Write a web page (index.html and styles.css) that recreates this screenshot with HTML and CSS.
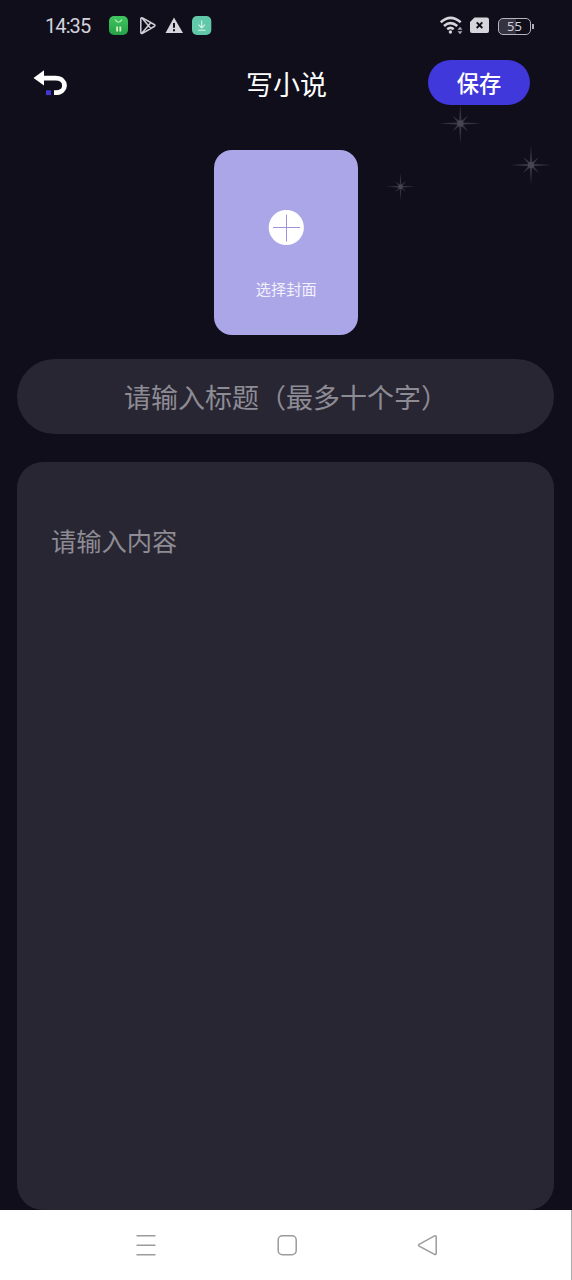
FILE: index.html
```html
<!DOCTYPE html>
<html lang="zh-CN">
<head>
<meta charset="utf-8">
<title>写小说</title>
<link rel="stylesheet" href="styles.css">
</head>
<body>
<div class="screen">
  <header class="status">
    <span class="time">14:35</span>
    <svg class="status-icons" width="104" height="20" viewBox="0 0 104 20">
      <defs><linearGradient id="green" x1="0" y1="0" x2="0" y2="1"><stop offset="0" stop-color="#3fc75f"/><stop offset="1" stop-color="#25a048"/></linearGradient></defs>
      <rect x="0" y="0" width="19" height="19" rx="5" fill="url(#green)"/>
      <path d="M6 3.500Q9.500 9 13 3.500" fill="none" stroke="#c8f0b8" stroke-width="1.200"/>
      <path d="M7.200 10.500h1.800v5H7.200zM10.400 10.500h1.800v5h-1.800z" fill="#d5f2c4"/>
      <path d="M31.800 3Q31.800 1.200 33.500 1.900L45.200 8.500Q46.800 9.500 45.200 10.500L33.500 17.300Q31.800 18 31.800 16.200ZM33 2L41.800 12.500M33 17L41.800 6.700" fill="none" stroke="#cfced5" stroke-width="1.500" stroke-linejoin="round"/>
      <path d="M65 1.500L74 17H56.500Z" fill="#d6d5dc"/>
      <path d="M65 7v4.800M65 13.300v2" stroke="#100e1b" stroke-width="2"/>
      <rect x="83" y="0" width="19.300" height="19" rx="5" fill="#61c8a8"/>
      <path d="M92.700 4.500v7M89.500 8.700l3.200 3.200 3.200-3.200M89 14.300h7.500" fill="none" stroke="#d8f3e8" stroke-width="1.100"/>
    </svg>
    <svg class="status-wifi" width="49" height="20" viewBox="0 0 49 20">
      <g fill="none" stroke="#d6d5dc" stroke-width="2.500">
        <path d="M.8 6.300Q10.500-2.500 20.700 6.300M4 10Q10.500 4.300 17.300 10M7.200 13.300Q10.500 10.500 13.700 13.300"/>
      </g>
      <circle cx="10.400" cy="16" r="1.700" fill="#d6d5dc"/>
      <path d="M17.500 13.800l2.500-3 2.500 3zM17.500 15.300h5l-2.500 3z" fill="#aaa9b2"/>
      <path d="M34.500 1.500H47q2 0 2 2V15q0 2-2 2H32q-2 0-2-2V6z" fill="#d6d5dc"/>
      <path d="M36.700 6.400l5.600 5.600M42.300 6.400l-5.600 5.600" stroke="#100e1b" stroke-width="1.900"/>
    </svg>
    <div class="battery"><span class="level">55</span></div>
  </header>

  <nav class="bar">
    <svg class="back" width="36" height="28" viewBox="0 0 36 28">
      <path d="M9 9.200H22.500C34.500 9.200 34.500 23.600 22.500 23.600H21" fill="none" stroke="#fff" stroke-width="4.800"/>
      <path d="M.5 9L11 1.200V16.500Z" fill="#fff"/>
      <rect x="13" y="21.300" width="5" height="4.800" fill="#4038d3"/>
    </svg>
    <h1 class="title">写小说</h1>
    <button class="save">保存</button>
  </nav>

  <svg class="stars" width="172" height="100" viewBox="0 0 172 100">
    <defs>
      <g id="star">
        <path d="M0-20L1.300-1.300 21 0 1.300 1.300 0 20-1.300 1.300-21 0-1.300-1.300ZM-8-8L0-2 8-8 2 0 8 8 0 2-8 8-2 0Z" fill="#35333f"/>
        <circle r="3.200" fill="#474551"/>
      </g>
    </defs>
    <use href="#star" x="70.300" y="18.500"/>
    <use href="#star" x="141" y="60"/>
    <use href="#star" transform="translate(10.500 81.700) scale(.7)"/>
  </svg>

  <main class="form">
    <div class="cover">
      <svg class="plus" width="36" height="36" viewBox="0 0 36 36">
        <circle cx="18.300" cy="17.500" r="17.600" fill="#fff"/>
        <path d="M5 17.500h27M18.500 4.500v27" stroke="#9b94d8" stroke-width="1"/>
      </svg>
      <span class="cover-label">选择封面</span>
    </div>
    <div class="field">请输入标题（最多十个字）</div>
    <div class="editor">请输入内容</div>
  </main>

  <footer class="system-nav">
    <svg width="22" height="22" viewBox="0 0 22 22"><path d="M1.500 1.800h19M1.500 11.300h19M1.500 20.800h19"/></svg>
    <svg width="22" height="22" viewBox="0 0 22 22"><rect x="2.200" y="1.800" width="18" height="19" rx="4.200"/></svg>
    <svg width="22" height="22" viewBox="0 0 22 22"><path d="M2.200 10.300L17.500 1.900Q19.200 1.100 19.200 3V19.200Q19.200 21.100 17.500 20.300L2.200 12.200Q.8 11.200 2.200 10.300Z"/></svg>
  </footer>
</div>
</body>
</html>
```
FILE: styles.css
```css
* { box-sizing: border-box; }

body {
  margin: 0;
  background: #100e1b;
  font-family: "Noto Sans", "Noto Sans CJK SC", sans-serif;
}

.screen {
  position: relative;
  display: flex;
  flex-direction: column;
  width: 572px;
  height: 1280px;
  background: #100e1b;
  overflow: hidden;
}

.status {
  display: flex;
  align-items: flex-start;
  height: 60px;
  padding: 16px 38px 0 45px;
}

.time {
  width: 64px;
  color: #d3d2da;
  font: 20px/21px Roboto, sans-serif;
  letter-spacing: -0.900px;
  white-space: nowrap;
}

.status-wifi { margin: 0 9px 0 auto; }

.battery {
  display: flex;
  align-items: center;
  width: 36px;
  height: 20px;
}

.battery::after {
  content: "";
  width: 2px;
  height: 5px;
  margin-left: 1px;
  background: #aeadb6;
}

.level {
  width: 33px;
  height: 17px;
  border: 1px solid #b5b4bc;
  border-radius: 5px;
  background: linear-gradient(90deg, #35333f 55%, #100e1b 55%);
  color: #d3d2da;
  font: 13px/15px "Noto Sans", sans-serif;
  text-align: center;
}

.bar {
  display: grid;
  grid-template-columns: 1fr 100px 1fr;
  grid-template-rows: 45px;
  align-items: center;
  height: 45px;
  padding: 0 42px 0 33px;
}

.title {
  margin: 2px -5px 0 5px;
  color: #fff;
  font: 400 27px/43px "Noto Sans CJK SC", sans-serif;
  text-align: center;
  white-space: nowrap;
}

.save {
  justify-self: end;
  width: 102px;
  height: 45px;
  padding: 0 0 2px;
  border: 0;
  border-radius: 23px;
  background: #4038da;
  color: #fff;
  font: 500 22.300px/42px "Noto Sans CJK SC", sans-serif;
}

.stars {
  position: absolute;
  top: 105px;
  left: 390px;
  overflow: visible;
}

.form {
  display: flex;
  flex: 1;
  flex-direction: column;
  align-items: center;
  padding: 45px 18px 0 17.400px;
  font-family: "Noto Sans CJK SC", sans-serif;
}

.cover {
  display: flex;
  flex-direction: column;
  align-items: center;
  width: 144.500px;
  height: 185px;
  padding-top: 60px;
  margin-left: 1px;
  border-radius: 18px;
  background: #aba6e7;
}

.cover-label {
  margin-top: 30px;
  color: #f3f1fc;
  font-size: 15.200px;
  line-height: 24px;
}

.field {
  width: 100%;
  height: 74.500px;
  margin-top: 24px;
  padding-left: 106.500px;
  border-radius: 38px;
  background: #282632;
  color: #8d8b94;
  font-size: 27px;
  line-height: 75px;
  white-space: nowrap;
}

.editor {
  flex: 1;
  width: 100%;
  margin-top: 28.500px;
  padding: 59px 33.500px;
  border-radius: 26px;
  background: #282632;
  color: #8d8b94;
  font-size: 25.300px;
  line-height: 38px;
}

.system-nav {
  display: flex;
  justify-content: center;
  gap: 119px;
  height: 70px;
  padding: 24px 0 0 2px;
  border-right: 1px solid #aaa;
  background: #fff;
}

.system-nav svg {
  fill: none;
  stroke: #9b9b9b;
  stroke-width: 1.500;
}
```
